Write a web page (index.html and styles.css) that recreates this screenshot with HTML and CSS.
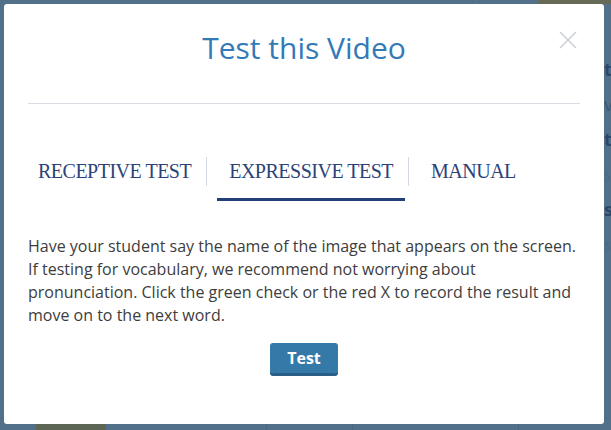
FILE: index.html
```html
<!DOCTYPE html>
<html lang="en">
<head>
    <meta charset="UTF-8">
    <meta name="viewport" content="width=device-width, initial-scale=1.0">
    <title>Test this Video</title>
    <link rel="stylesheet" href="styles.css">
</head>
<body>
    <div class="page">
        <div class="page-top">
            <span class="page-top-line"></span>
            <span class="page-top-block"></span>
        </div>
        <div class="page-main">
            <div class="page-side">
                <p class="side-strong">t</p>
                <p>v</p>
                <p class="side-strong">t</p>
                <p class="side-faint">s</p>
                <p class="side-strong">s</p>
                <p class="side-faint">s</p>
            </div>
        </div>
        <div class="page-tabs">
            <span class="page-play">Play</span>
            <span class="page-tab">Flash Cards</span>
            <span class="page-tab">Test</span>
            <span class="page-tab page-tab-wide"></span>
        </div>
    </div>

    <div class="modal">
        <div class="modal-header">
            <h2>Test this Video</h2>
            <button class="close" aria-label="Close">
                <svg width="18" height="18" viewBox="0 0 18 18">
                    <path d="M1 1 L17 17 M17 1 L1 17" stroke="#cdd1d5" stroke-width="1.6" fill="none"/>
                </svg>
            </button>
        </div>

        <ul class="tabs">
            <li><a href="#">Receptive Test</a></li>
            <li><a href="#" class="active">Expressive Test</a></li>
            <li><a href="#">Manual</a></li>
        </ul>

        <p class="intro">Have your student say the name of the image that appears on the screen. If testing for vocabulary, we recommend not worrying about pronunciation. Click the green check or the red X to record the result and move on to the next word.</p>

        <div class="actions">
            <button class="btn">Test</button>
        </div>
    </div>
</body>
</html>
```

FILE: styles.css
```css
body {
    font-family: "Open Sans", Arial, sans-serif;
    margin: 0;
    background-color: #52708a;
    width: 611px;
    height: 430px;
    overflow: hidden;
    position: relative;
}

/* page behind the overlay */
.page {
    display: flex;
    flex-direction: column;
    height: 430px;
}

.page-top {
    display: flex;
    height: 4px;
}

.page-top-line {
    width: 1px;
    margin-left: 476px;
    background-color: #5b7790;
}

.page-top-block {
    margin-left: auto;
    width: 73px;
    background-color: #666b58;
}

.page-main {
    flex: 1;
    padding-left: 604px;
    padding-top: 48px;
}

.page-side p {
    margin: 0;
    font-size: 18px;
    line-height: 35px;
    color: #3c5773;
    white-space: nowrap;
}

.page-side .side-strong {
    font-weight: 700;
    color: #2d4866;
}

.page-side .side-faint {
    font-size: 14px;
    color: #4b6781;
}

.page-tabs {
    display: flex;
    height: 6px;
    padding-left: 36px;
    overflow: hidden;
}

.page-tabs span {
    font-size: 22px;
    line-height: 30px;
    color: #3b536b;
}

.page-play {
    width: 69px;
    background-color: #5d6655;
    text-align: center;
    color: #414a3e !important;
}

.page-tab {
    border-left: 1px solid #4a677f;
    padding: 0 22px 0 20px;
}

.page-tab-wide {
    width: 165px;
    border-right: 1px solid #4a677f;
    padding: 0;
}

/* modal */
.modal {
    position: absolute;
    top: 4px;
    left: 4px;
    width: 600px;
    height: 420px;
    box-sizing: border-box;
    background-color: #fff;
    border-radius: 3px;
    padding: 0 24px;
}

.modal-header {
    padding-top: 27px;
    padding-bottom: 39px;
    border-bottom: 1px solid #d6dce1;
    text-align: center;
}

.modal-header h2 {
    margin: 0;
    font-size: 30px;
    font-weight: 400;
    line-height: 33px;
    color: #337ab7;
}

.close {
    position: absolute;
    top: 27px;
    right: 27px;
    padding: 0;
    border: 0;
    background: none;
    width: 18px;
    height: 18px;
}

.close svg {
    display: block;
}

.tabs {
    list-style: none;
    display: flex;
    margin: 53px 0 0 -2px;
    padding: 0;
}

.tabs li {
    display: flex;
    align-items: flex-start;
}

.tabs li + li::before {
    content: "";
    width: 1px;
    height: 29px;
    background-color: #d3d9e2;
    margin: 0 10px 0 3px;
}

.tabs a {
    display: block;
    padding: 0 12px 12px;
    border-bottom: 3px solid transparent;
    font-family: "Liberation Serif", "Times New Roman", serif;
    font-size: 20px;
    line-height: 29px;
    letter-spacing: -0.5px;
    text-transform: uppercase;
    text-decoration: none;
    color: #2b4278;
}

.tabs a.active {
    border-bottom-color: #243f78;
}

.intro {
    margin: 34px 0 0;
    font-size: 16px;
    line-height: 23px;
    color: #3d3d3d;
}

.actions {
    text-align: center;
    margin-top: 16px;
}

.btn {
    font-family: "Open Sans", Arial, sans-serif;
    font-size: 16px;
    font-weight: 700;
    line-height: 30px;
    height: 33px;
    padding: 0 17px;
    border: 0;
    border-bottom: 3px solid #295f87;
    border-radius: 3px;
    background-color: #3579a8;
    color: #fff;
}
```
